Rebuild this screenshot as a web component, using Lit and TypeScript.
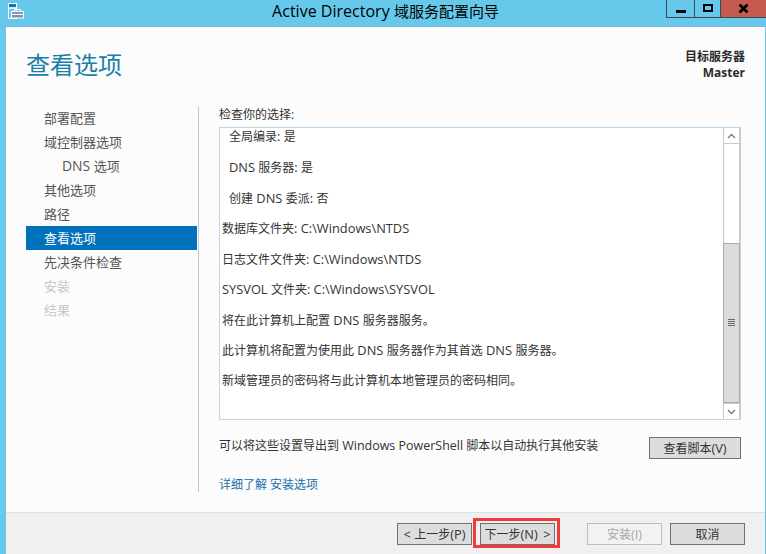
import { LitElement, html, css } from "lit";
import { customElement } from "lit/decorators.js";

const lines: [string, boolean][] = [
  ["全局编录: 是", true],
  ["DNS 服务器: 是", true],
  ["创建 DNS 委派: 否", true],
  ["数据库文件夹: C:\\Windows\\NTDS", false],
  ["日志文件文件夹: C:\\Windows\\NTDS", false],
  ["SYSVOL 文件夹: C:\\Windows\\SYSVOL", false],
  ["将在此计算机上配置 DNS 服务器服务。", false],
  ["此计算机将配置为使用此 DNS 服务器作为其首选 DNS 服务器。", false],
  ["新域管理员的密码将与此计算机本地管理员的密码相同。", false],
];

const nav: [string, string][] = [
  ["部署配置", ""],
  ["域控制器选项", ""],
  ["DNS 选项", "sub"],
  ["其他选项", ""],
  ["路径", ""],
  ["查看选项", "sel"],
  ["先决条件检查", ""],
  ["安装", "off"],
  ["结果", "off"],
];

/* Latin runs of the original UI font are slightly wider than Open Sans at the same size. */
const mix = (s: string) =>
  s.split(/([\x20-\x7e\u2009]+)/).map((part, i) => (i % 2 ? html`<span class="lat">${part}</span>` : part));

@customElement("app-root")
export class AppRoot extends LitElement {
  static styles = css`
    :host {
      display: block;
      width: 766px;
      height: 554px;
      overflow: hidden;
      font-family: "Open Sans", "Noto Sans CJK SC", sans-serif;
      font-size: 12px;
      color: #333;
    }
    .lat { font-size: 1.07em; }
    .win {
      width: 766px;
      height: 554px;
      background: #66c9ec;
      display: flex;
      flex-direction: column;
    }
    .titlebar {
      height: 27px;
      box-sizing: border-box;
      flex: none;
      display: flex;
      position: relative;
      border-bottom: 1px solid #7cb3c8;
    }
    .appicon {
      margin: 3px 0 0 8px;
      width: 17px;
      height: 17px;
    }
    .title {
      position: absolute;
      left: 0;
      right: -5px;
      top: 0;
      text-align: center;
      font-size: 15px;
      line-height: 22px;
      color: #000;
    }
    .ctl {
      position: absolute;
      right: 0;
      top: 0;
      display: flex;
      height: 18px;
    }
    .ctl div {
      height: 18px;
      box-sizing: border-box;
      border-left: 1px solid #3c4a50;
      border-bottom: 1px solid #3c4a50;
      display: flex;
      align-items: center;
      justify-content: center;
    }
    .ctl .min { width: 28px; }
    .ctl .max { width: 26px; }
    .ctl .close { width: 46px; background: #c55a50; }
    .body {
      flex: 1;
      margin: 0 1px 0 6px;
      background: #fcfcfc;
      display: flex;
      flex-direction: column;
      min-height: 0;
    }
    .main {
      flex: 1;
      display: grid;
      grid-template-columns: 193px 1fr;
      grid-template-rows: 79px 1fr;
      min-height: 0;
    }
    .heading {
      font-size: 24px;
      line-height: 32px;
      color: #1a7fa8;
      padding: 22px 0 0 20px;
      white-space: nowrap;
    }
    .server {
      text-align: right;
      padding: 22px 20px 0 0;
      font-weight: 700;
      line-height: 16px;
      color: #2b2b2b;
    }
    .nav {
      margin: 0 0 0 20px;
    }
    .nav div {
      height: 24px;
      line-height: 24px;
      width: 171px;
      padding-left: 18px;
      box-sizing: border-box;
      color: #555;
      font-size: 13px;
    }
    .nav .sub { padding-left: 36px; }
    .nav .sel { background: #0072bc; color: #fff; }
    .nav .off { color: #c8c8c8; }
    .pane {
      border-left: 1px solid #c6c9cc;
      margin-left: -1px;
      padding: 0 24px 0 20px;
      height: 386px;
      display: flex;
      flex-direction: column;
    }
    .label {
      flex: none;
      height: 21px;
      line-height: 18px;
      color: #333;
      font-size: 12px;
    }
    .box {
      height: 293px;
      box-sizing: border-box;
      border: 1px solid #bcd6ec;
      background: #fff;
      display: flex;
      flex: none;
    }
    .scrolltext {
      flex: 1;
      overflow: hidden;
      padding-left: 2px;
      margin-top: -1.7px;
    }
    .scrolltext p {
      margin: 0;
      height: 30.6px;
      line-height: 20px;
      font-size: 12px;
      color: #333;
      white-space: nowrap;
    }
    .scrolltext p.in { padding-left: 7px; }
    .sb {
      width: 15px;
      flex: none;
      display: flex;
      flex-direction: column;
      background: #fff;
      border-left: 1px solid #c8c8c8;
      border-right: 1px solid #c8c8c8;
    }
    .sb .arrow {
      height: 16px;
      box-sizing: border-box;
      flex: none;
      display: flex;
      align-items: center;
      justify-content: center;
      border-bottom: 1px solid #c8c8c8;
    }
    .sb .arrow.down { border-bottom: 0; border-top: 1px solid #c8c8c8; }
    .sb .gap { height: 99px; flex: none; }
    .sb .thumb {
      flex: 1;
      background: #dcdcdc;
      border: 1px solid #ababab;
      margin: 0 -1px;
      display: flex;
      align-items: center;
      justify-content: center;
    }
    .export {
      flex: none;
      display: flex;
      align-items: flex-start;
      justify-content: space-between;
      margin-top: 17px;
      height: 22px;
      font-size: 12px;
      line-height: 17px;
    }
    .export > span .lat { font-size: 1.04em; }
    .link {
      flex: none;
      margin-top: 17px;
      color: #1a6fa8;
      line-height: 18px;
    }
    .btn {
      box-sizing: border-box;
      height: 22px;
      border: 1px solid #707070;
      background: #dddddd;
      color: #333;
      display: flex;
      align-items: center;
      justify-content: center;
      font-size: 12px;
      white-space: pre;
    }
    .footer {
      height: 42px;
      flex: none;
      background: #f0f0f0;
      border-top: 1px solid #dfdfdf;
      box-sizing: border-box;
      display: flex;
      align-items: flex-start;
      padding: 10px 20px 0 391px;
    }
    .b75 { width: 75px; }
    .b92 { width: 92px; }
    .next {
      position: relative;
      margin-left: 8px;
    }
    .next::after {
      content: "";
      position: absolute;
      inset: -6px -6px -4px -8px;
      border: 3px solid #f23a3a;
      pointer-events: none;
    }
    .dis {
      margin-left: 32px;
      background: #f2f2f2;
      border-color: #bdbdbd;
      color: #a8a8a8;
    }
    .cancel { margin-left: 8px; }
  `;

  render() {
    return html`
      <div class="win">
        <div class="titlebar">
          <svg class="appicon" viewBox="0 0 17 17" fill="none">
            <rect x="0.5" y="0.5" width="8" height="15" stroke="#fff" />
            <rect x="1" y="1" width="7" height="3.500" fill="#1f6fb0" />
            <path d="M1 5h7" stroke="#fff" stroke-width="1.500" />
            <rect x="3.500" y="8.500" width="12" height="6.500" fill="#7f97a8" stroke="#fff" />
            <path d="M6.500 8.500V6.500h6v2M4 11.500h11" stroke="#fff" />
          </svg>
          <div class="title">${mix("Active Directory 域服务配置向导")}</div>
          <div class="ctl">
            <div class="min">
              <svg width="10" height="9" viewBox="0 0 10 9"><rect y="6" width="10" height="3" fill="#000" /></svg>
            </div>
            <div class="max">
              <svg width="10" height="9" viewBox="0 0 10 9"><rect x="1" y="1" width="8" height="6" fill="none" stroke="#000" stroke-width="2" /></svg>
            </div>
            <div class="close">
              <svg width="11" height="9" viewBox="0 0 11 9"><path d="M1.500 .5L9.500 8.500M9.500 .5L1.500 8.500" stroke="#000" stroke-width="2.800" fill="none" /></svg>
            </div>
          </div>
        </div>
        <div class="body">
          <div class="main">
            <div class="heading">查看选项</div>
            <div class="server">目标服务器<br />Master</div>
            <div class="nav">
              ${nav.map(([t, c]) => html`<div class=${c}>${mix(t)}</div>`)}
            </div>
            <div class="pane">
              <div class="label">检查你的选择:</div>
              <div class="box">
                <div class="scrolltext">
                  ${lines.map(([t, i]) => html`<p class=${i ? "in" : ""}>${mix(t)}</p>`)}
                </div>
                <div class="sb">
                  <div class="arrow">
                    <svg width="9" height="6" viewBox="0 0 9 6"><path d="M1 5l3.500-3.500L8 5" stroke="#777" stroke-width="1.300" fill="none" /></svg>
                  </div>
                  <div class="gap"></div>
                  <div class="thumb">
                    <svg width="7" height="8" viewBox="0 0 7 8"><path d="M0 .5h7M0 2.500h7M0 4.500h7M0 6.500h7" stroke="#6a6a6a" /></svg>
                  </div>
                  <div class="arrow down">
                    <svg width="9" height="6" viewBox="0 0 9 6"><path d="M1 1l3.500 3.500L8 1" stroke="#777" stroke-width="1.300" fill="none" /></svg>
                  </div>
                </div>
              </div>
              <div class="export">
                <span>${mix("可以将这些设置导出到 Windows PowerShell 脚本以自动执行其他安装")}</span>
                <div class="btn b92">${mix("查看脚本(V)")}</div>
              </div>
              <div class="link">详细了解 安装选项</div>
            </div>
          </div>
          <div class="footer">
            <div class="btn b75">${mix("< 上一步(P)")}</div>
            <div class="btn b75 next">${mix("下一步(N) \u2009>")}</div>
            <div class="btn b75 dis">${mix("安装(I)")}</div>
            <div class="btn b75 cancel">取消</div>
          </div>
        </div>
      </div>
    `;
  }
}
